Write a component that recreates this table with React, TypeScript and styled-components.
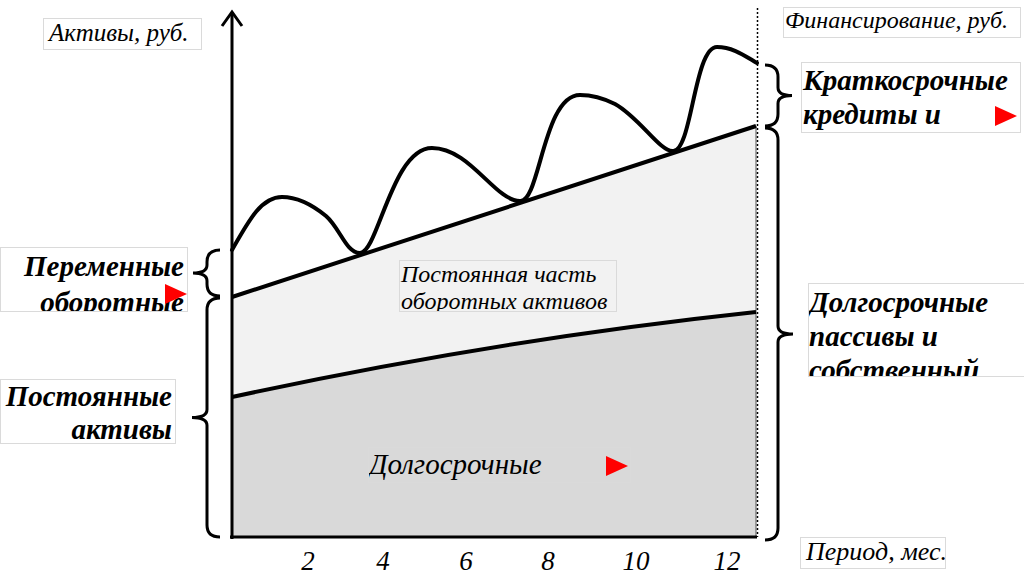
import React from 'react';
import styled, { createGlobalStyle, css } from 'styled-components';

const GlobalStyle = createGlobalStyle`
    html, body {
        margin: 0;
        padding: 0;
        background: #ffffff;
    }
    body {
        font-family: "Liberation Serif", "Times New Roman", serif;
        color: #000000;
    }
`;

const Stage = styled.div`
    position: relative;
    width: 1024px;
    height: 577px;
    overflow: hidden;
    background: #ffffff;
`;

const Chart = styled.svg`
    display: block;
    width: 1024px;
    height: 577px;
`;

const TickText = styled.text`
    font-family: "Liberation Serif", "Times New Roman", serif;
    font-style: italic;
    font-size: 27px;
    fill: #000000;
`;

type LabelProps = {
    $x: number;
    $y: number;
    $w: number;
    $h: number;
    $strong?: boolean;
    $size: number;
    $lh: number;
    $pad?: number;
    $pt?: number;
    $align?: 'left' | 'right';
};

// Text frame placed on the diagram canvas
const Label = styled.div<LabelProps>`
    position: absolute;
    left: ${(p) => p.$x}px;
    top: ${(p) => p.$y}px;
    width: ${(p) => p.$w}px;
    height: ${(p) => p.$h}px;
    box-sizing: border-box;
    border: 1px solid #dadada;
    overflow: hidden;
    font-family: "Liberation Serif", "Times New Roman", serif;
    font-style: italic;
    font-size: ${(p) => p.$size}px;
    line-height: ${(p) => p.$lh}px;
    text-align: ${(p) => p.$align ?? 'left'};
    padding: ${(p) => p.$pt ?? 0}px ${(p) => p.$pad ?? 0}px 0;
    white-space: nowrap;
    ${(p) =>
        p.$strong &&
        css`
            font-weight: bold;
        `}
`;

// Red marker triangle laid over a frame
const Marker = styled.span<{ $x: number; $y: number }>`
    position: absolute;
    left: ${(p) => p.$x}px;
    top: ${(p) => p.$y}px;
    width: 0;
    height: 0;
    border-top: 10px solid transparent;
    border-bottom: 10px solid transparent;
    border-left: 22px solid #ff0000;
`;

const ticks = [
    { label: '2', x: 308 },
    { label: '4', x: 383 },
    { label: '6', x: 466 },
    { label: '8', x: 548 },
    { label: '10', x: 636 },
    { label: '12', x: 727 },
];

const wave =
    'M232,250 C250,218 262,197 282,197 C300,197 315,207 326,216 C340,228 346,253 360,253 ' +
    'C378,253 392,148 432,148 C470,148 495,201 520,201 C540,203 543,95 580,95 ' +
    'C595,95 605,99 615,104 C640,118 660,152 673,151 C692,152 694,47 717,47 ' +
    'C733,47 745,56 757,63';

const brace = (x0: number, y0: number, y1: number, tip: number) => {
    const mid = (y0 + y1) / 2;
    const dir = tip > x0 ? 1 : -1;
    const xv = x0 + dir * 13;
    return (
        `M${x0},${y0} Q${xv},${y0} ${xv},${y0 + 12} L${xv},${mid - 8} ` +
        `Q${xv},${mid} ${tip},${mid} Q${xv},${mid} ${xv},${mid + 8} ` +
        `L${xv},${y1 - 12} Q${xv},${y1} ${x0},${y1}`
    );
};

const Diagram: React.FC = () => (
    <Chart viewBox="0 0 1024 577">
        <path d="M232,397 Q494,340 756,312 L756,537 L232,537 Z" fill="#d9d9d9" />
        <path d="M232,297 L756,126 L756,312 Q494,340 232,397 Z" fill="#f2f2f2" />
        <line x1="756" y1="126" x2="756" y2="537" stroke="#555" strokeWidth="1" />
        <path d="M232,397 Q494,340 756,312" fill="none" stroke="#000" strokeWidth="4" />
        <path d="M232,297 L756,126" fill="none" stroke="#000" strokeWidth="4" />
        <path d={wave} fill="none" stroke="#000" strokeWidth="4" strokeLinecap="round" />
        <line x1="232" y1="539" x2="232" y2="12" stroke="#000" strokeWidth="3" />
        <polyline points="222,26 232,12 242,26" fill="none" stroke="#000" strokeWidth="3" />
        <line x1="230" y1="537" x2="757" y2="537" stroke="#000" strokeWidth="3" />
        <line x1="757.5" y1="8" x2="757.5" y2="537" stroke="#000" strokeWidth="1.5" strokeDasharray="2 2" />
        <g fill="none" stroke="#000" strokeWidth="3">
            <path d={brace(765, 65, 126, 792)} />
            <path d={brace(765, 128, 540, 793)} />
            <path d={brace(220, 250, 296, 193)} />
            <path d={brace(220, 298, 537, 192)} />
        </g>
        {ticks.map((t) => (
            <TickText key={t.label} x={t.x} y={570} textAnchor="middle">
                {t.label}
            </TickText>
        ))}
    </Chart>
);

export default function App() {
    return (
        <>
            <GlobalStyle />
            <Stage>
                <Diagram />
                <Label $x={43} $y={18} $w={159} $h={32} $size={25} $lh={28} $pad={5}>
                    Активы, руб.
                </Label>
                <Label $x={783} $y={7} $w={238} $h={31} $size={24} $lh={25} $pad={1}>
                    Финансирование, руб.
                </Label>
                <Label $x={801} $y={62} $w={220} $h={71} $strong $size={29} $lh={34} $pad={1}>
                    Краткосрочные
                    <br />
                    кредиты и
                    <Marker $x={193} $y={43} />
                </Label>
                <Label $x={0} $y={247} $w={188} $h={65} $strong $size={29} $lh={36} $pad={3} $align="right">
                    Переменные
                    <br />
                    оборотные
                    <Marker $x={164} $y={36} />
                </Label>
                <Label $x={0} $y={379} $w={176} $h={65} $strong $size={29} $lh={33} $pad={3} $align="right">
                    Постоянные
                    <br />
                    активы
                </Label>
                <Label $x={399} $y={260} $w={218} $h={52} $size={24} $lh={27} $pad={1}>
                    Постоянная часть
                    <br />
                    оборотных активов
                </Label>
                <Label $x={368} $y={447} $w={263} $h={36} $size={29} $lh={32}>
                    Долгосрочные
                    <Marker $x={237} $y={8} />
                </Label>
                <Label $x={808} $y={283} $w={220} $h={94} $strong $size={29} $lh={34} $pt={1}>
                    Долгосрочные
                    <br />
                    пассивы и
                    <br />
                    собственный
                </Label>
                <Label $x={800} $y={537} $w={146} $h={32} $size={26} $lh={28} $pad={5}>
                    Период, мес.
                </Label>
            </Stage>
        </>
    );
}
